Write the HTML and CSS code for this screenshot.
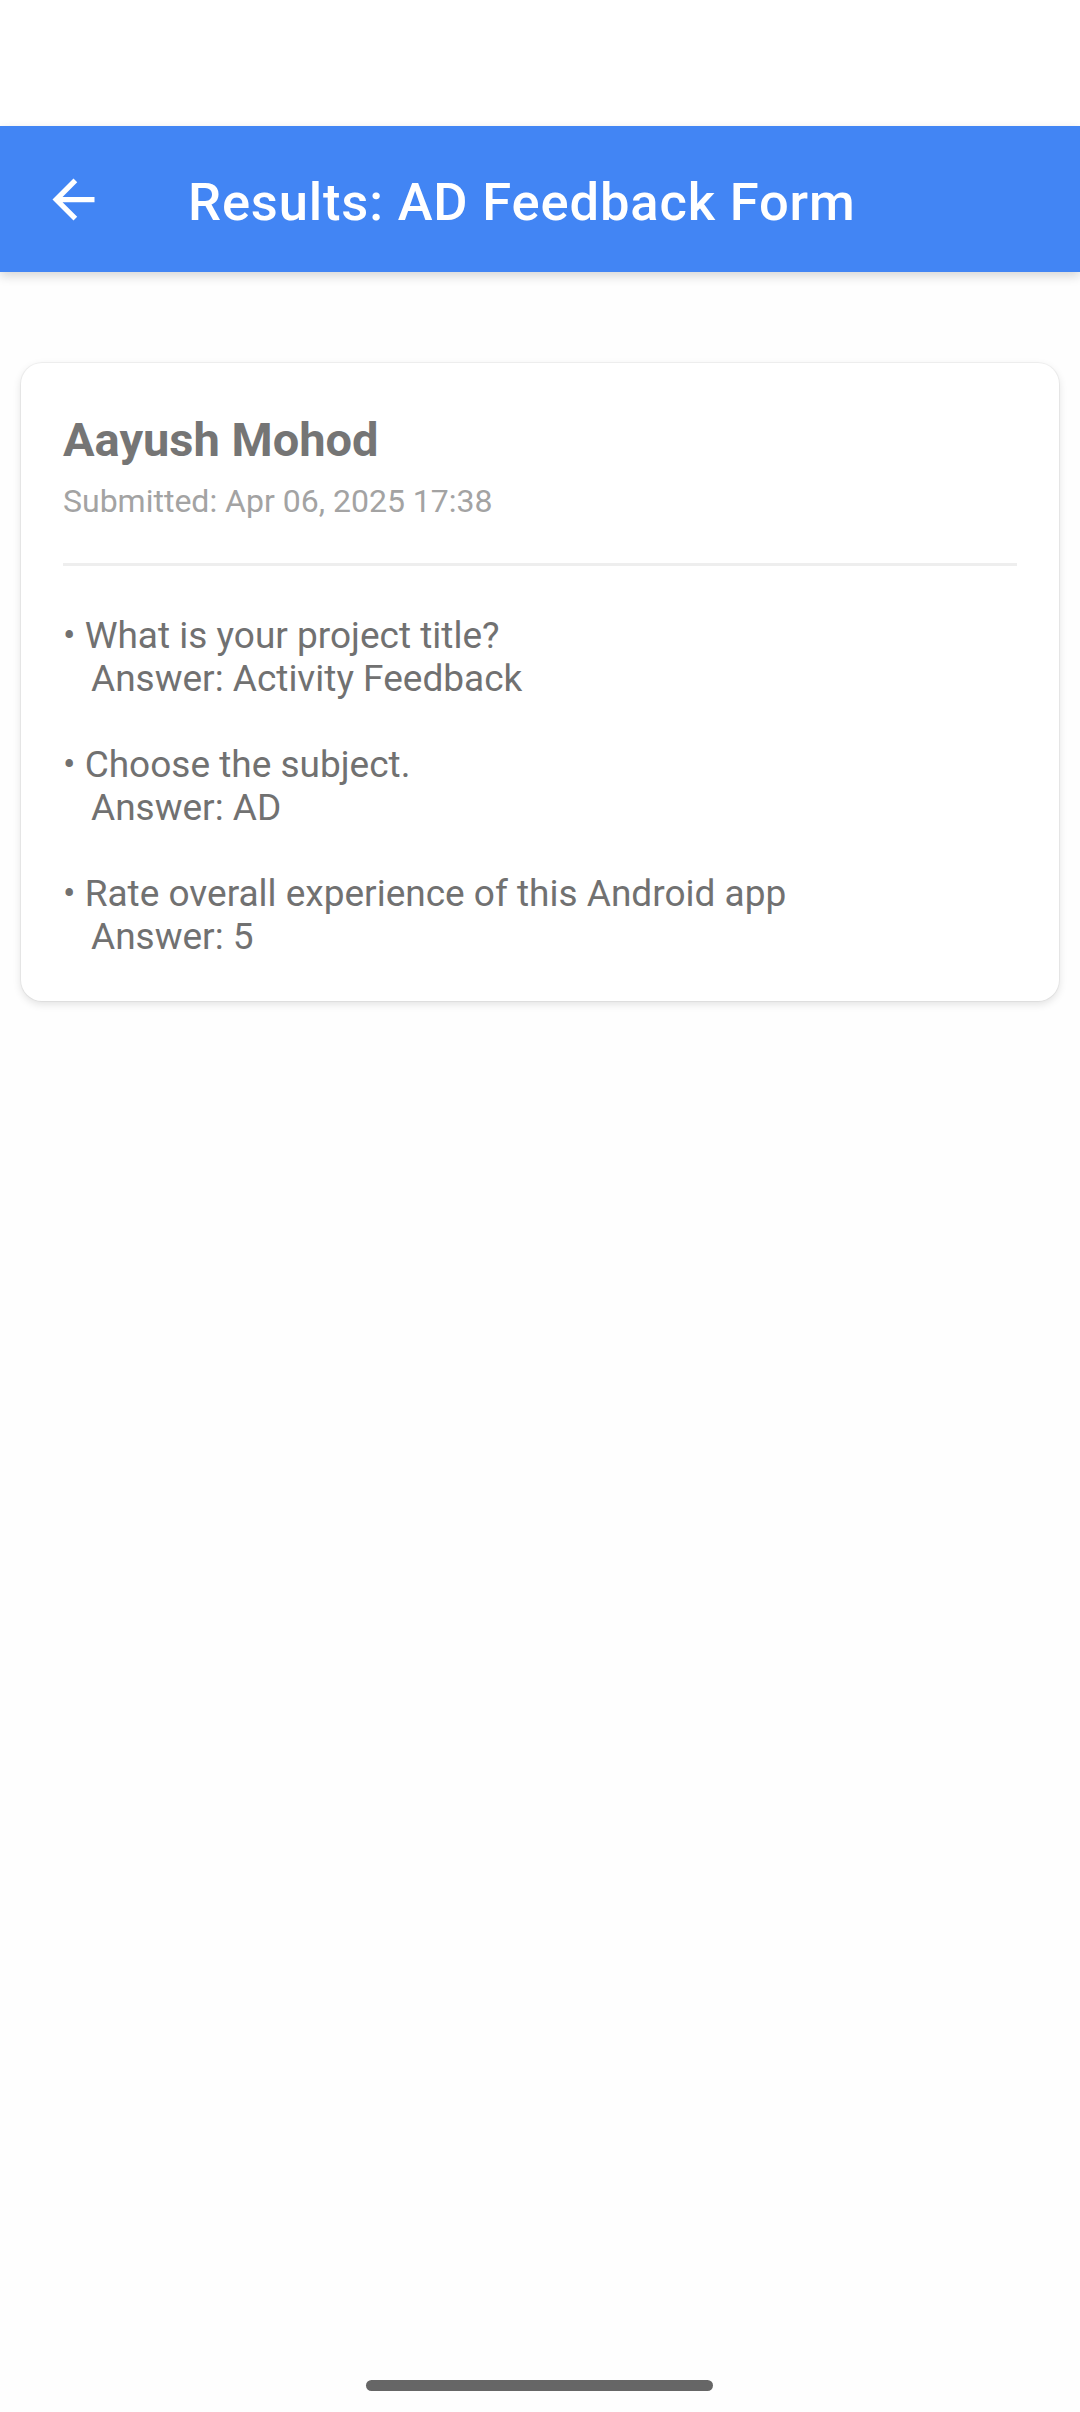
FILE: index.html
```html
<!DOCTYPE html>
<html lang="en">
<head>
<meta charset="utf-8">
<title>Results: AD Feedback Form</title>
<link rel="stylesheet" href="styles.css">
</head>
<body>
<div class="screen">
  <div class="status"></div>
  <header class="appbar">
    <button class="nav-btn" aria-label="Back">
      <svg viewBox="0 0 24 24" width="63" height="63"><path fill="#ffffff" d="M20 11H7.83l5.59-5.59L12 4l-8 8 8 8 1.41-1.41L7.83 13H20v-2z"/></svg>
    </button>
    <h1 class="title">Results: AD Feedback Form</h1>
  </header>
  <main class="content">
    <section class="card">
      <div class="name">Aayush Mohod</div>
      <div class="submitted">Submitted: Apr 06, 2025 17:38</div>
      <div class="divider"></div>
      <div class="qa-list">
        <div class="qa">
          <div class="q">• What is your project title?</div>
          <div class="a">Answer: Activity Feedback</div>
        </div>
        <div class="qa">
          <div class="q">• Choose the subject.</div>
          <div class="a">Answer: AD</div>
        </div>
        <div class="qa">
          <div class="q">• Rate overall experience of this Android app</div>
          <div class="a">Answer: 5</div>
        </div>
      </div>
    </section>
  </main>
  <div class="home-indicator"></div>
</div>
</body>
</html>
```
FILE: styles.css
```css
html, body {
  margin: 0;
  padding: 0;
}
body {
  background: #fefefe;
  font-family: Roboto, "Noto Sans", sans-serif;
}
.screen {
  position: relative;
  width: 1080px;
  height: 2412px;
  overflow: hidden;
  background: #fefefe;
}
.status {
  height: 126px;
  background: #ffffff;
}
.appbar {
  height: 146px;
  background: #4285f4;
  display: flex;
  align-items: center;
  box-shadow: 0 4px 10px rgba(0, 0, 0, 0.16);
  position: relative;
}
.nav-btn {
  margin: 0 0 0 42px;
  padding: 0;
  border: 0;
  background: transparent;
  width: 63px;
  height: 63px;
  display: flex;
}
.title {
  margin: 0 0 0 83px;
  padding-top: 6px;
  font-size: 52.5px;
  font-weight: 500;
  letter-spacing: 0.016em;
  color: #ffffff;
  line-height: 62px;
}
.content {
  padding: 91px 21px 0 21px;
}
.card {
  background: #ffffff;
  border-radius: 21px;
  padding: 49px 42px 43px 42px;
  box-shadow: 0 0 0 1px rgba(0, 0, 0, 0.045), 0 3px 8px rgba(0, 0, 0, 0.12);
}
.name {
  font-size: 47px;
  font-weight: 700;
  line-height: 55px;
  color: #757575;
}
.submitted {
  margin-top: 16px;
  font-size: 32px;
  line-height: 37px;
  color: #a3a3a3;
}
.divider {
  margin-top: 43px;
  height: 3px;
  background: #eeeeee;
}
.qa-list {
  margin-top: 48px;
  display: flex;
  flex-direction: column;
  gap: 43px;
  font-size: 37px;
  line-height: 43px;
  color: #717171;
}
.a {
  padding-left: 28px;
}
.home-indicator {
  position: absolute;
  left: 366px;
  top: 2380px;
  width: 347px;
  height: 11px;
  border-radius: 6px;
  background: #666666;
}
```
